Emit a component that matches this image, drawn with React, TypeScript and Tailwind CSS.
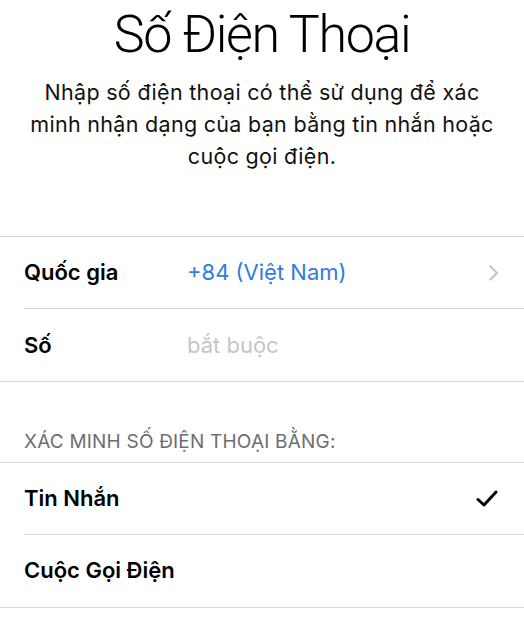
const FONT = { fontFamily: 'Inter, "Noto Sans", "Liberation Sans", sans-serif' }

function Row({ label, children, last }: { label: string; children?: React.ReactNode; last?: boolean }) {
  return (
    <div className="pl-6">
      <div className={`flex h-[72px] items-center pr-[26px] ${last ? '' : 'border-b border-[#d9d9dc]'}`}>
        <span className="w-[163px] text-[22px] font-semibold text-black">{label}</span>
        <div className="flex flex-1 items-center justify-between">{children}</div>
      </div>
    </div>
  )
}

export default function App() {
  return (
    <div className="h-[620px] w-full overflow-hidden bg-white" style={FONT}>
      <h1
        className="pt-[3px] text-center text-[52px] font-light leading-[64px] tracking-[-1.4px] text-black"
        style={{ fontFamily: 'Roboto, Inter, sans-serif' }}
      >
        Số Điện Thoại
      </h1>
      <p className="mx-auto mt-[9px] w-[484px] text-center text-[21.5px] leading-[32px] tracking-[0.3px] text-[#111]">
        Nhập số điện thoại có thể sử dụng để xác
        <br />
        minh nhận dạng của bạn bằng tin nhắn hoặc
        <br />
        cuộc gọi điện.
      </p>

      <div className="mt-[64px] border-y border-[#d9d9dc]">
        <Row label="Quốc gia">
          <span className="text-[22px] text-[#2f7de1]">+84 (Việt Nam)</span>
          <svg width="9" height="16" viewBox="0 0 9 16" fill="none">
            <path d="M1.5 1.5l6.5 6.5-6.5 6.5" stroke="#c4c4c8" strokeWidth="2" strokeLinecap="round" strokeLinejoin="round" />
          </svg>
        </Row>
        <Row label="Số" last>
          <span className="text-[22px] text-[#c5c5c9]">bắt buộc</span>
        </Row>
      </div>

      <div className="px-6 pb-[5px] pt-[46px] text-[19px] uppercase tracking-[0.2px] text-[#6d6d72]">
        Xác minh số điện thoại bằng:
      </div>

      <div className="border-y border-[#d9d9dc]">
        <Row label="Tin Nhắn">
          <span />
          <svg width="22" height="17" viewBox="0 0 22 17" fill="none">
            <path d="M2 9.5l6 5.5L20 2" stroke="#000" strokeWidth="3" strokeLinecap="round" strokeLinejoin="round" />
          </svg>
        </Row>
        <Row label="Cuộc Gọi Điện" last />
      </div>
    </div>
  )
}
